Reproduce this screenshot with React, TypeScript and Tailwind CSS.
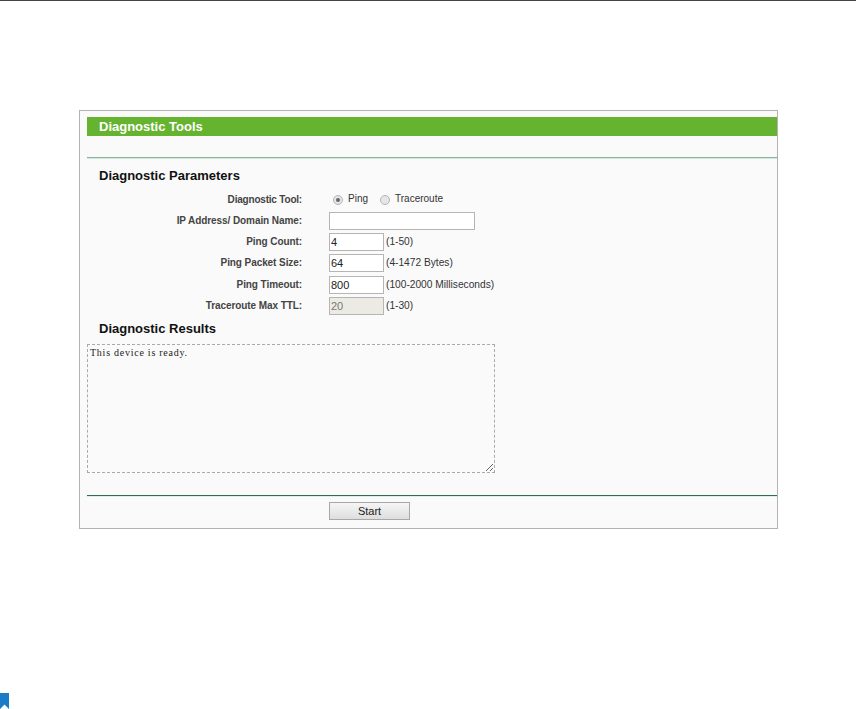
const rows = [
  { label: "IP Address/ Domain Name:", value: "", wide: true },
  { label: "Ping Count:", value: "4", hint: "(1-50)" },
  { label: "Ping Packet Size:", value: "64", hint: "(4-1472 Bytes)" },
  { label: "Ping Timeout:", value: "800", hint: "(100-2000 Milliseconds)", gap: true },
  { label: "Traceroute Max TTL:", value: "20", hint: "(1-30)", disabled: true },
];

function Radio({ checked }: { checked?: boolean }) {
  return (
    <span className="flex h-[10px] w-[10px] items-center justify-center rounded-full border border-[#b4b4b4] bg-[#e6e6e6]">
      {checked && <span className="h-[4px] w-[4px] rounded-full bg-[#666666]" />}
    </span>
  );
}

export default function App() {
  return (
    <div className="h-[709px] w-[856px] overflow-hidden bg-white font-['Liberation_Sans',Arial,sans-serif]">
      <div className="h-px bg-[#444444]" />
      <div className="pl-[79px] pt-[109px]">
        <div className="h-[419px] w-[699px] border border-[#b2b2b2] bg-[#fafafa] pl-[7px] pt-[6px]">
          <div className="flex h-[19px] items-center bg-[#65b32e] pl-[12px] text-[13px] font-bold text-white">
            Diagnostic Tools
          </div>
          <div className="mt-[21px] h-[2px] border-t border-[#86b89f] bg-[#d5e7dc]" />
          <h2 className="mt-[9px] pl-[12px] text-[13px] font-bold leading-[16px] text-[#111111]">
            Diagnostic Parameters
          </h2>
          <div className="mt-[5px] flex h-[21px] items-center text-[10px] text-[#333333]">
            <span className="w-[215px] text-right text-[10px] font-bold tracking-[-0.2px] text-[#444444]">
              Diagnostic Tool:
            </span>
            <span className="ml-[31px] flex items-center gap-[5px]">
              <Radio checked />
              <span className="-mt-[2px]">Ping</span>
            </span>
            <span className="ml-[12px] flex items-center gap-[5px]">
              <Radio />
              <span className="-mt-[2px]">Traceroute</span>
            </span>
          </div>
          {rows.map((row) => (
            <div
              key={row.label}
              className={`flex h-[21px] items-center text-[10.2px] text-[#333333] ${row.gap ? "mt-px" : ""}`}
            >
              <span className="w-[215px] text-right text-[10px] font-bold tracking-[-0.08px] text-[#444444]">
                {row.label}
              </span>
              <input
                readOnly
                disabled={row.disabled}
                value={row.value}
                className={`ml-[27px] h-[18px] border border-[#b5b5b5] px-[1px] text-[11px] text-[#222222] ${
                  row.wide ? "w-[146px]" : "w-[55px]"
                } ${row.disabled ? "bg-[#ebebe4] text-[#777777]" : "bg-white"}`}
              />
              {row.hint && <span className="ml-[2px]">{row.hint}</span>}
            </div>
          ))}
          <h2 className="mt-[5px] pl-[12px] text-[13px] font-bold leading-[16px] text-[#111111]">
            Diagnostic Results
          </h2>
          <textarea
            readOnly
            value="This device is ready."
            className="mt-[7px] block h-[129px] w-[408px] border border-dashed border-[#aaaaaa] bg-[#fafafa] px-[2px] py-[2px] font-['Liberation_Serif',serif] text-[10px] leading-[12px] tracking-[0.75px] text-[#222222] outline-none"
          />
          <div className="mt-[22px] h-[2px] border-t border-[#2f6f4f] bg-[#dcefe4]" />
          <div className="mt-[5px] pl-[242px]">
            <button className="block h-[18px] w-[81px] border border-[#a8a8a8] bg-gradient-to-b from-[#f6f6f6] to-[#dedede] text-[11px] text-[#222222]">
              Start
            </button>
          </div>
        </div>
      </div>
      <svg className="absolute left-0 top-[693px]" width="10" height="16" viewBox="0 0 10 16">
        <path d="M0 0H9V16L4.5 11.5L0 16Z" fill="#1a7cc9" />
      </svg>
    </div>
  );
}
